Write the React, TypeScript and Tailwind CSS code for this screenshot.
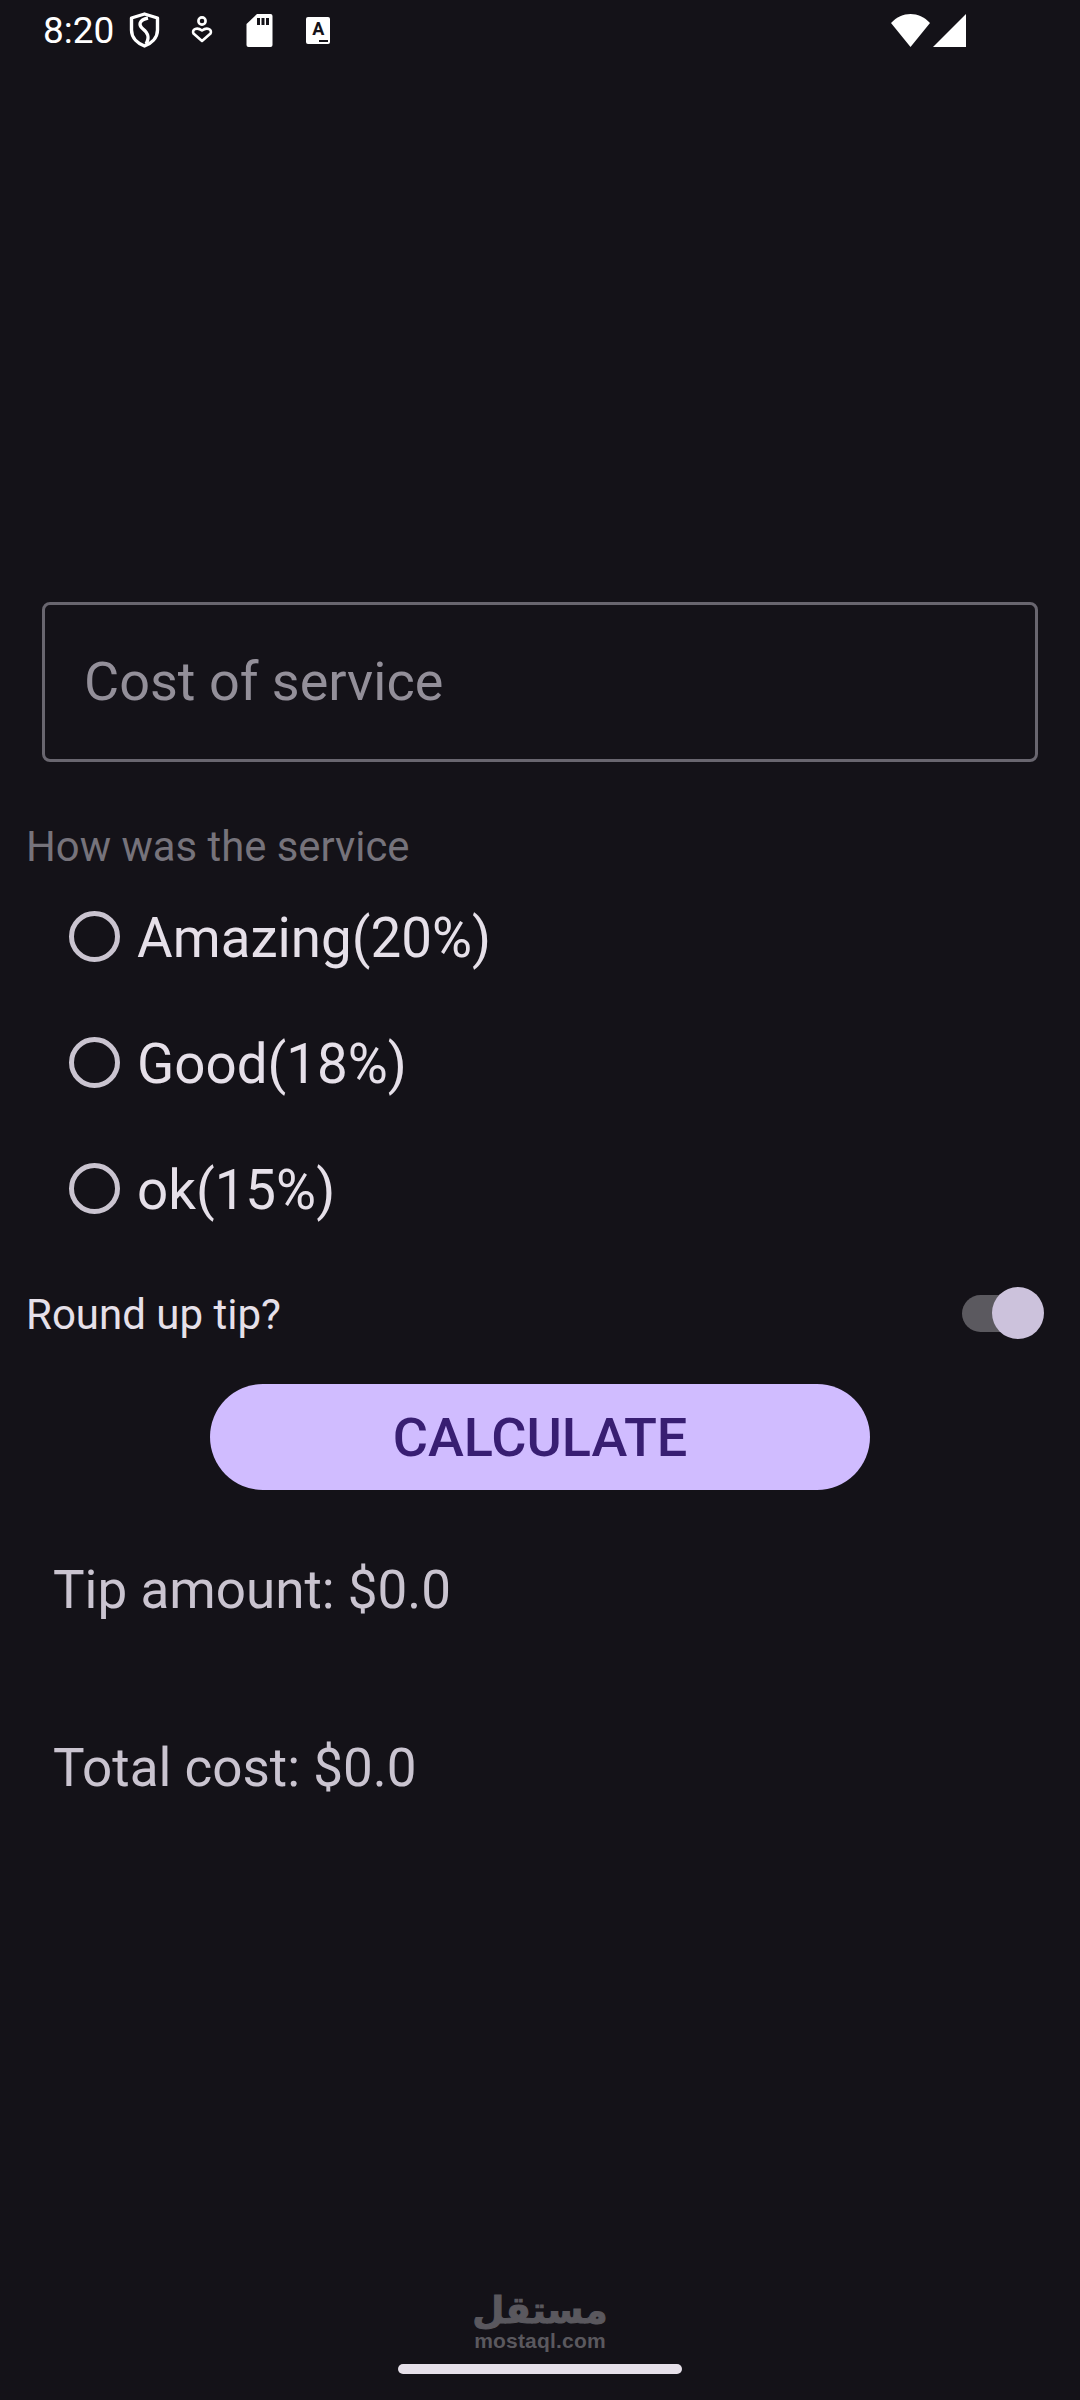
export default function App() {
  const Radio = ({ label }: { label: string }) => (
    <div className="flex h-[126px] items-center pl-[69px]">
      <span className="mb-[4px] h-[51px] w-[51px] shrink-0 rounded-full border-[5px] border-[#cac4d0]" />
      <span className="ml-[17px] text-[54.7px] leading-none text-[#e6e0e9]">{label}</span>
    </div>
  );
  return (
    <div className="relative flex h-[2400px] w-[1080px] flex-col overflow-hidden bg-[#141218] font-['Roboto',sans-serif]">
      <div className="flex h-[60px] items-center pl-[43px] pr-[114px]">
        <span className="text-[37px] leading-none text-white">8:20</span>
        <svg className="ml-[15px]" width="31" height="36" viewBox="0 0 31 36" fill="none">
          <path d="M15.5 2 L28.5 6 V18 C28.5 26 22 31.5 15.5 34 C9 31.5 2.5 26 2.5 18 V6 Z" stroke="white" strokeWidth="3.4" strokeLinejoin="round" />
          <path d="M19 6 C10 8 9 13 14 17 C19 21 21 25 17 32" stroke="white" strokeWidth="3.4" />
        </svg>
        <svg className="ml-[31px]" width="22" height="28" viewBox="0 0 22 28" fill="none">
          <circle cx="11" cy="5" r="3.6" stroke="white" strokeWidth="2.6" />
          <path d="M11 25 L2.5 17.5 C0.5 14 5.5 10.5 11 14.5 C16.5 10.5 21.5 14 19.5 17.5 Z" stroke="white" strokeWidth="2.6" strokeLinejoin="round" />
        </svg>
        <svg className="ml-[33px]" width="27" height="33" viewBox="0 0 27 33">
          <path d="M11 0 H24.5 Q26.5 0 26.5 2 V31 Q26.5 33 24.5 33 H2.5 Q0.5 33 0.5 31 V10 Z" fill="white" />
          <rect x="11" y="4" width="3" height="7" fill="#141218" />
          <rect x="15.5" y="4" width="3" height="7" fill="#141218" />
          <rect x="20" y="4" width="3" height="7" fill="#141218" />
        </svg>
        <span className="relative ml-[33px] flex h-[27px] w-[24px] justify-center rounded-[2px] bg-white text-[18px] font-bold leading-[24px] text-[#141218]">
          A
          <span className="absolute bottom-[2px] right-[2px] h-[2px] w-[9px] bg-[#141218]" />
        </span>
        <div className="ml-auto flex items-center gap-[3px]">
          <svg width="39" height="33" viewBox="0 0 39 33"><path d="M0 9 C11 -3 28 -3 39 9 L19.5 33 Z" fill="white" /></svg>
          <svg width="33" height="33" viewBox="0 0 33 33"><path d="M33 0 V33 H0 Z" fill="white" /></svg>
        </div>
      </div>

      <div className="ml-[42px] mr-[42px] mt-[542px] flex h-[160px] items-center rounded-[8px] border-[3px] border-[#69666f] pl-[39px]">
        <span className="text-[54px] leading-none text-[#938f99]">Cost of service</span>
      </div>

      <div className="mt-[55px] flex h-[58px] items-center pl-[26px] pt-[2px] text-[41.8px] leading-none text-[#76737b]">How was the service</div>

      <div>
        <Radio label="Amazing(20%)" />
        <Radio label="Good(18%)" />
        <Radio label="ok(15%)" />
      </div>

      <div className="flex h-[121px] items-center justify-between pl-[26px] pr-[58px]">
        <span className="pt-[2px] text-[42px] leading-none text-[#e6e0e9]">Round up tip?</span>
        <div className="relative h-[37px] w-[60px] rounded-l-full bg-[#5b595f]">
          <span className="absolute -top-[8px] left-[30px] h-[52px] w-[52px] rounded-full bg-[#ccc2dc]" />
        </div>
      </div>

      <button className="mx-auto mt-[10px] flex h-[106px] w-[660px] items-center justify-center rounded-full bg-[#d0bcff] pt-[2px] text-[54px] font-medium leading-none text-[#381e72]">
        CALCULATE
      </button>

      <div className="flex h-[200px] items-center pl-[53px] text-[53px] leading-none text-[#cac4d0]">Tip amount: $0.0</div>
      <div className="flex h-[154px] items-center pl-[53px] pt-[3px] text-[53px] leading-none text-[#cac4d0]">Total cost: $0.0</div>

      <div className="absolute bottom-[50px] left-0 right-0 flex flex-col items-center text-[#5a585e]">
        <span className="font-['DejaVu_Sans',sans-serif] text-[37px] font-bold leading-[42px] [-webkit-text-stroke:1px_#5a585e]" dir="rtl">مستقل</span>
        <span className="font-['Liberation_Sans',sans-serif] text-[21px] font-bold leading-[18px] tracking-[0.2px]">mostaql.com</span>
      </div>
      <div className="absolute bottom-[26px] left-[398px] h-[10px] w-[284px] rounded-full bg-[#e6e0e9]" />
    </div>
  );
}
